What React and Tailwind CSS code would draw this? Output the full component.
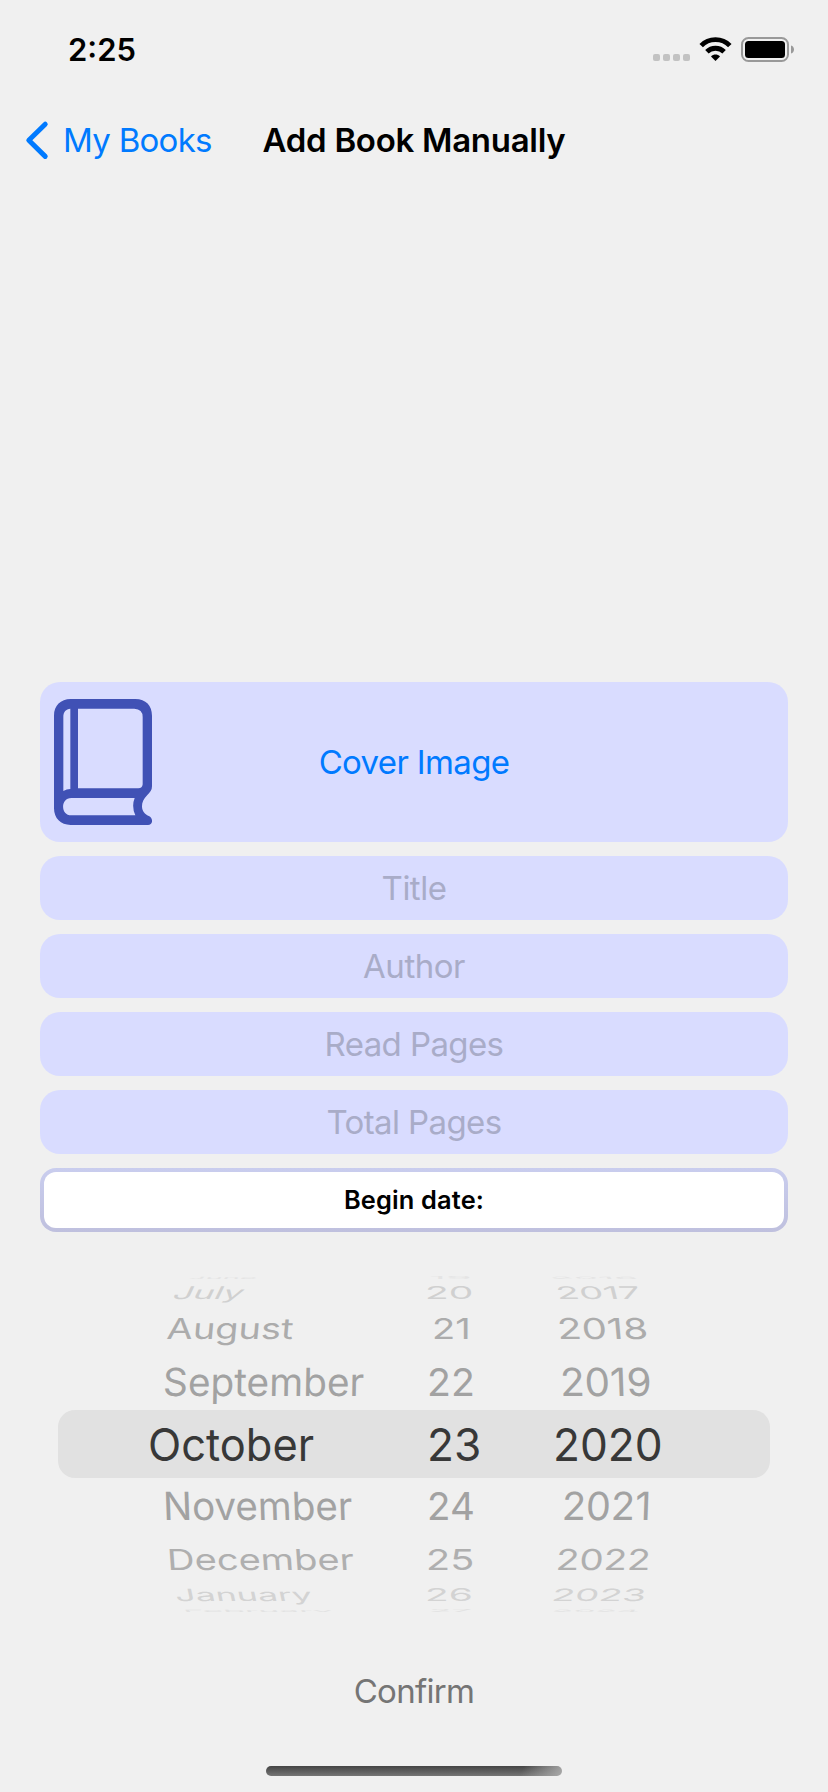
import { useLayoutEffect, useRef, useState } from "react";

const fields = [
  { label: "Title", track: "tracking-[-0.5px]" },
  { label: "Author", track: "tracking-[-0.5px]" },
  { label: "Read Pages", track: "tracking-[-0.6px]" },
  { label: "Total Pages", track: "tracking-[-0.6px]" },
];

// Each cell: [text, left offset inside its column, drawn width, skew in degrees]
const wheel = [
  { row: "h-[6px] text-[#e4e4e4]", squash: 0.07, shift: -1.8, cells: [["June", 37, 68, -40], ["19", 0, 43, 0], ["2016", -4, 88, 35]] },
  { row: "h-[21px] text-[#d0d0d0]", squash: 0.39, shift: 0.6, cells: [["July", 22, 70, -26], ["20", -4, 48, 0], ["2017", 2, 84.5, 14]] },
  { row: "h-[51px] text-[#acacac]", squash: 0.65, shift: 0, cells: [["August", 15, 126.5, -5], ["21", 3, 38.5, 0], ["2018", 3, 91, 5]] },
  { row: "h-[56px] text-[#a2a2a2]", squash: 0.87, shift: -0.4, cells: [["September", 11, 201, -1], ["22", -2, 47.5, 0], ["2019", 6, 91.5, 2]] },
  { row: "h-[68px] text-[#383838]", squash: 1.01, shift: 0.7, cells: [["October", -4, 166.5, 0], ["23", -2.5, 54.5, 0], ["2020", -1.5, 110, 0]] },
  { row: "h-[57px] text-[#a2a2a2]", squash: 0.87, shift: 0, cells: [["November", 11, 189.5, 2], ["24", -2, 47.5, 0], ["2021", 8, 89.5, -2]] },
  { row: "h-[49px] text-[#afafaf]", squash: 0.65, shift: 0, cells: [["December", 15, 187, 4], ["25", -3, 48, 0], ["2022", 1.5, 95, -4]] },
  { row: "h-[23px] text-[#d3d3d3]", squash: 0.38, shift: 0, cells: [["January", 23, 137, 12], ["26", -4, 48, 0], ["2023", -2, 94, -12]] },
  { row: "h-[5px] text-[#e2e2e2]", squash: 0.07, shift: 1.3, cells: [["February", 31, 150, 35], ["27", 0, 43, 0], ["2024", -2, 88, -35]] },
];

const columnClass = ["w-[277px]", "w-[125px]", "w-[140px]"];

function WheelText({ text, left, width, skew, squash, shift }) {
  const ref = useRef(null);
  const [stretch, setStretch] = useState(1);
  useLayoutEffect(() => {
    setStretch(width / ref.current.offsetWidth);
  }, [width]);
  return (
    <span
      ref={ref}
      className="block w-max shrink-0 whitespace-nowrap"
      style={{
        marginLeft: left,
        transformOrigin: "0 50%",
        transform: `translateY(${shift}px) skewX(${skew}deg) scale(${stretch}, ${squash})`,
      }}
    >
      {text}
    </span>
  );
}

function BookIcon() {
  return (
    <svg className="h-[126px] w-[98px]" viewBox="0 0 294 378" fill="#4051b5" fillRule="evenodd">
      <path d="M50 0H244C276 0 294 20 294 50V262C294 274 288 280 280 288C268 300 264 310 264 322C264 336 272 346 286 352C298 359 297 378 282 378H50C20 378 0 358 0 328V50C0 20 20 0 50 0ZM28 276V54C28 38 36 30 49 29V270Q38 270 28 276ZM72 29H241Q266 30 266 54V256Q265 268 253 268H72ZM52 297H242Q232 322 244 349H52C19 349 19 297 52 297Z" />
    </svg>
  );
}

function StatusIcons() {
  return (
    <svg className="h-[26px] w-[142px]" viewBox="653 36 142 26" fill="none">
      <g fill="#c2c2c2">
        <rect x="653" y="54" width="7" height="7" rx="2" />
        <rect x="663" y="54" width="7" height="7" rx="2" />
        <rect x="673" y="54" width="7" height="7" rx="2" />
        <rect x="683" y="54" width="7" height="7" rx="2" />
      </g>
      <path d="M701.2 45.6C708.7 37.6 722.3 37.6 729.8 45.6" stroke="#000" strokeWidth="4.8" />
      <path d="M706.9 51.8C711.5 47.1 719.5 47.1 724.1 51.8" stroke="#000" strokeWidth="4.8" />
      <path d="M711 56.4C713.5 53.9 717.5 53.9 720 56.4L715.5 61Z" fill="#000" />
      <rect x="742" y="38" width="46" height="23" rx="6.5" stroke="#999" strokeWidth="2" />
      <rect x="745" y="41" width="40" height="17" rx="3.5" fill="#000" />
      <path d="M791 45.5C795 46.5 795 52.5 791 53.5Z" fill="#999" />
    </svg>
  );
}

export default function App() {
  return (
    <div className="flex h-[1792px] w-[828px] flex-col overflow-hidden bg-[#f0f0f0] font-['Inter',sans-serif] text-[33px] leading-none">
      <header className="mb-[2px] flex h-[98px] items-center justify-between pl-[68px] pr-[33px]">
        <div className="text-[31px] font-semibold">2:25</div>
        <StatusIcons />
      </header>

      <nav className="grid h-[80px] grid-cols-[240px_1fr_240px] items-center">
        <div className="flex items-center pl-[24px] text-[#007aff]">
          <svg className="h-[40px] w-[26px]" viewBox="24 120 26 40" fill="none" stroke="currentColor" strokeWidth="5" strokeLinecap="round" strokeLinejoin="round">
            <path d="M45.2 124.2L28.8 140.2L45.2 156.4" />
          </svg>
          <span className="ml-[13px] whitespace-nowrap tracking-[-0.72px]">My Books</span>
        </div>
        <h1 className="whitespace-nowrap text-center font-semibold tracking-[-0.28px]">Add Book Manually</h1>
      </nav>

      <main className="flex flex-col gap-[14px] px-10 pt-[502px]">
        <div className="grid h-[160px] grid-cols-[112px_1fr_112px] items-center rounded-[20px] bg-[#d9dcff] px-[14px]">
          <BookIcon />
          <span className="text-center tracking-[-0.65px] text-[#007aff]">Cover Image</span>
        </div>
        {fields.map((f) => (
          <div key={f.label} className={`flex h-16 items-center justify-center rounded-[20px] bg-[#d9dcff] text-[#a9acc8] ${f.track}`}>
            {f.label}
          </div>
        ))}
        <div className="h-16 rounded-[16px] bg-linear-to-b from-[#c9cdee] to-[#bfc0de] p-1">
          <div className="flex h-full items-center justify-center rounded-[12px] bg-white text-[25.4px] font-semibold tracking-[0.15px]">
            Begin date:
          </div>
        </div>
      </main>

      <section className="mt-[44px] flex h-[336px] flex-col overflow-hidden px-[58px] text-[44.6px]">
        {wheel.map((r, i) => (
          <div key={i} className={`flex shrink-0 items-center pl-[94px] ${r.row} ${i === 4 ? "rounded-[17px] bg-[#e1e1e1]" : ""}`}>
            {r.cells.map(([text, left, width, skew], c) => (
              <div key={text} className={`shrink-0 ${columnClass[c]}`}>
                <WheelText text={text} left={left} width={width} skew={skew} squash={r.squash} shift={r.shift} />
              </div>
            ))}
          </div>
        ))}
      </section>

      <footer className="flex flex-col items-center pt-[62px]">
        <button className="h-[34px] leading-none tracking-[-0.7px] text-[#757575]">Confirm</button>
        <div className="mt-[58px] h-[10px] w-[296px] rounded-full bg-[linear-gradient(110deg,transparent_86%,#a8a8a8_100%),linear-gradient(to_bottom,#444,#757575)]" />
      </footer>
    </div>
  );
}
